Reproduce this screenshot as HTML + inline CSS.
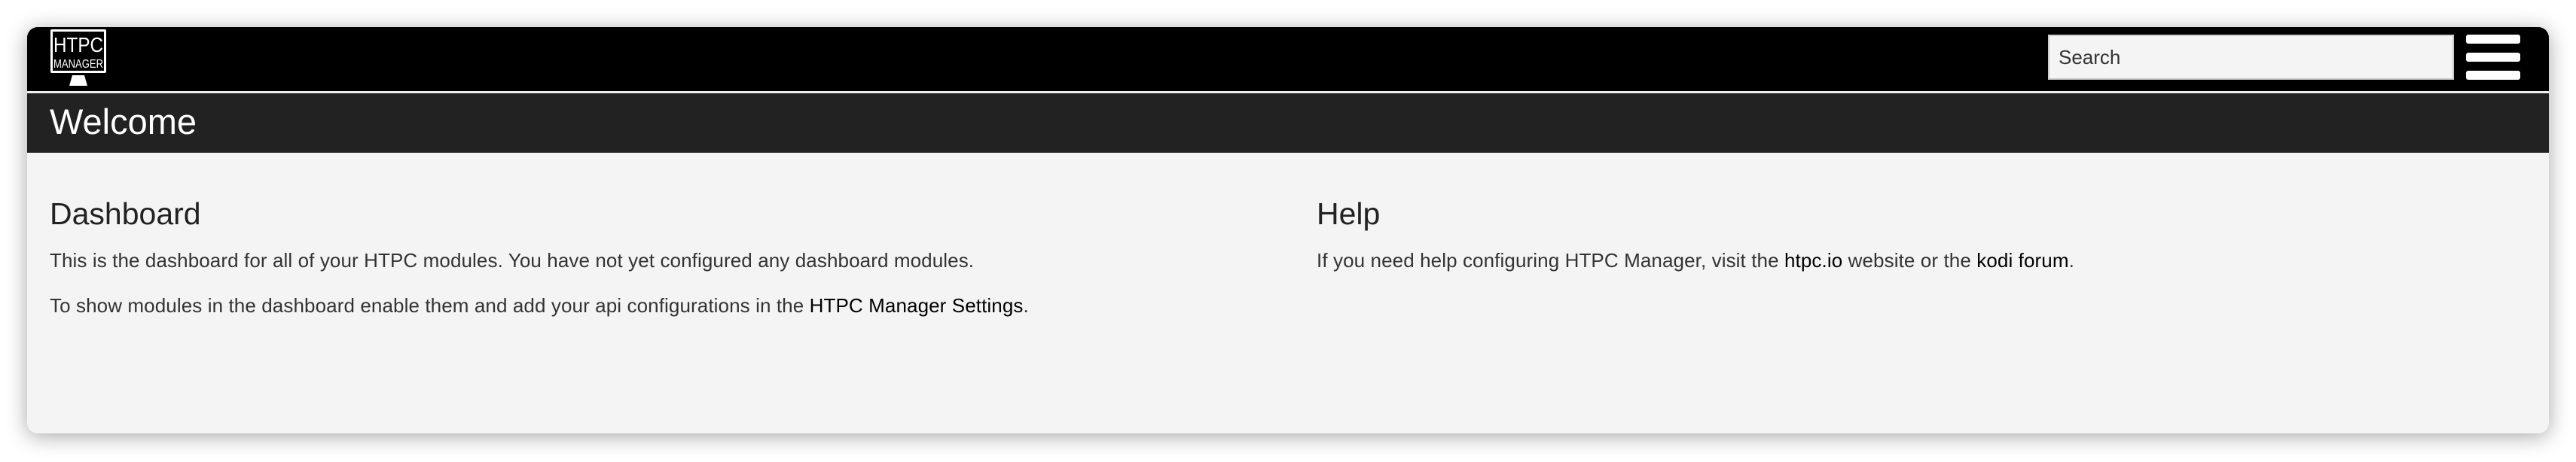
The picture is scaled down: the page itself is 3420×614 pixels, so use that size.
<!DOCTYPE html>
<html><head><meta charset="utf-8"><style>
html,body{margin:0;padding:0;background:#fff;width:3420px;height:614px;overflow:hidden;font-family:"Liberation Sans",sans-serif}
.card{position:absolute;left:36px;top:36px;width:3348px;height:540px;background:#f4f4f4;border-radius:14px;box-shadow:0 4px 28px rgba(0,0,0,.35);overflow:hidden}
.nav{position:absolute;left:0;top:0;width:100%;height:85px;background:#000}
.line{position:absolute;left:0;top:85px;width:100%;height:3px;background:#eee}
.bar{position:absolute;left:0;top:88px;width:100%;height:79px;background:#222}
.welcome{position:absolute;left:30px;top:96px;color:#fff;font-size:47px;line-height:60px}
.search{position:absolute;left:2683px;top:10px;width:539px;height:60px;background:#f4f4f4;border:2px solid #ccc;box-sizing:border-box;font-size:26px;color:#333;line-height:56px;padding-left:12px}
.hb{position:absolute;left:3238px;width:72px;height:12px;background:#fff;border-radius:3px}
.h{position:absolute;font-size:41px;color:#222;top:225px}
.p{position:absolute;font-size:26px;color:#333;letter-spacing:0.1px;white-space:nowrap}
.p b{font-weight:normal;color:#000}
</style></head><body>
<div class="card">
 <div class="nav">
  <svg style="position:absolute;left:31px;top:3px" width="74" height="76" viewBox="0 0 74 76">
   <rect x="0" y="0" width="74" height="58" rx="2" fill="#fff"/>
   <rect x="3" y="3" width="68" height="52" fill="#000"/>
   <text x="37" y="30" fill="#fff" font-family="Liberation Sans" font-size="28" text-anchor="middle" textLength="66" lengthAdjust="spacingAndGlyphs">HTPC</text>
   <text x="37" y="51" fill="#fff" font-family="Liberation Sans" font-size="16" text-anchor="middle" textLength="66" lengthAdjust="spacingAndGlyphs">MANAGER</text>
   <polygon points="29,61 45,61 49,75 25,75" fill="#fff"/>
  </svg>
  <div class="search">Search</div>
  <div class="hb" style="top:10px"></div>
  <div class="hb" style="top:34px"></div>
  <div class="hb" style="top:58px"></div>
 </div>
 <div class="line"></div>
 <div class="bar"><div class="welcome" style="top:8px">Welcome</div></div>
 <div class="h" style="left:30px">Dashboard</div>
 <div class="p" style="left:30px;top:295px">This is the dashboard for all of your HTPC modules. You have not yet configured any dashboard modules.</div>
 <div class="p" style="left:30px;top:355px">To show modules in the dashboard enable them and add your api configurations in the <b>HTPC Manager Settings</b>.</div>
 <div class="h" style="left:1712px">Help</div>
 <div class="p" style="left:1712px;top:295px">If you need help configuring HTPC Manager, visit the <b>htpc.io</b> website or the <b>kodi forum</b>.</div>
</div>
</body></html>
